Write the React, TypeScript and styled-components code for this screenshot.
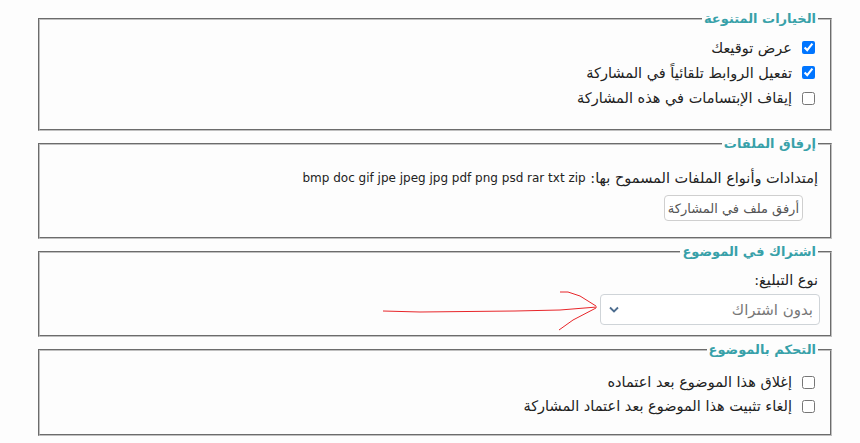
import React from "react";
import styled, { createGlobalStyle } from "styled-components";

const GlobalStyle = createGlobalStyle`
  html, body { margin: 0; padding: 0; background: #fdfdfd; }
  body { font-family: "DejaVu Sans", "Noto Sans", sans-serif; font-size: 14.5px; color: #222; }
`;

const Page = styled.div`
  position: relative;
  direction: rtl;
  padding: 11px 26px 0 36px;
  display: flex;
  flex-direction: column;
  gap: 5px;
`;

const Fieldset = styled.fieldset<{ $pb: number }>`
  margin: 0 2px;
  padding: 4px 12px ${(p) => p.$pb}px;
  border: 2px groove #c0c0c0;
  min-width: 0;
`;

const Legend = styled.legend`
  padding: 0 2px;
  font-weight: bold;
  font-size: 13px;
  color: #38a1a9;
`;

const CheckList = styled.div<{ $top: number }>`
  display: flex;
  flex-direction: column;
  padding-top: ${(p) => p.$top}px;
`;

const CheckRow = styled.label<{ $h: number }>`
  display: flex;
  align-items: center;
  gap: 10px;
  height: ${(p) => p.$h}px;
`;

const Check = styled.input.attrs({ type: "checkbox" })`
  margin: 0 3px 0 0;
  width: 13px;
  height: 13px;
`;

const Line = styled.div`
  height: 26px;
  display: flex;
  align-items: center;
  padding-top: 10px;
`;

const Latin = styled.span`
  font-family: "DejaVu Sans", sans-serif;
  font-size: 12px;
`;

const AttachButton = styled.span`
  display: inline-flex;
  align-items: center;
  align-self: flex-start;
  box-sizing: border-box;
  margin: 4px 15px 0 0;
  height: 26px;
  padding: 0 3px;
  border: 1px solid #cfcfcf;
  border-radius: 4px;
  color: #555;
  background: #fff;
  font-size: 13px;
`;

const Column = styled.div`
  display: flex;
  flex-direction: column;
`;

const FieldLabel = styled.div`
  padding-top: 7px;
  height: 20px;
  display: flex;
  align-items: center;
`;

const SelectBox = styled.div`
  margin-top: 4px;
  margin-right: -2px;
  width: 220px;
  height: 31px;
  border: 1px solid #cfd4d8;
  border-radius: 4px;
  background: #fff;
  display: flex;
  align-items: center;
  justify-content: space-between;
  padding: 0 6px 0 8px;
  box-sizing: border-box;
  color: #777;
  font-size: 15px;
`;

const Arrow = styled.svg`
  position: absolute;
  left: 0;
  top: 0;
  pointer-events: none;
`;

export default function App() {
  return (
    <>
      <GlobalStyle />
      <Page>
        <Fieldset $pb={18}>
          <Legend>الخيارات المتنوعة</Legend>
          <CheckList $top={5}>
            <CheckRow $h={25}><Check defaultChecked />عرض توقيعك</CheckRow>
            <CheckRow $h={25}><Check defaultChecked />تفعيل الروابط تلقائياً في المشاركة</CheckRow>
            <CheckRow $h={26}><Check />إيقاف الإبتسامات في هذه المشاركة</CheckRow>
          </CheckList>
        </Fieldset>
        <Fieldset $pb={16}>
          <Legend>إرفاق الملفات</Legend>
          <Column>
            <Line>
              إمتدادات وأنواع الملفات المسموح بها:&nbsp;<Latin dir="ltr">bmp doc gif jpe jpeg jpg pdf png psd rar txt zip</Latin>
            </Line>
            <AttachButton>أرفق ملف في المشاركة</AttachButton>
          </Column>
        </Fieldset>
        <Fieldset $pb={10}>
          <Legend>اشتراك في الموضوع</Legend>
          <Column>
            <FieldLabel>نوع التبليغ:</FieldLabel>
            <SelectBox>
              <span>بدون اشتراك</span>
              <svg width="10" height="7" viewBox="0 0 10 7">
                <path d="M1 1.5 L5 5.5 L9 1.5" fill="none" stroke="#4d6d8f" strokeWidth="1.8" />
              </svg>
            </SelectBox>
          </Column>
        </Fieldset>
        <Fieldset $pb={16}>
          <Legend>التحكم بالموضوع</Legend>
          <CheckList $top={9}>
            <CheckRow $h={24}><Check />إغلاق هذا الموضوع بعد اعتماده</CheckRow>
            <CheckRow $h={24}><Check />إلغاء تثبيت هذا الموضوع بعد اعتماد المشاركة</CheckRow>
          </CheckList>
        </Fieldset>
        <Arrow width="860" height="443" viewBox="0 0 860 443">
          <g fill="none" stroke="#e8262a" strokeWidth="1">
            <path d="M383 311 L420 312 L515 311 L560 310 L597 307" />
            <path d="M560 292 L568 292 L580 296 L596 306" />
            <path d="M559 330 L573 320 L596 308" />
          </g>
        </Arrow>
      </Page>
    </>
  );
}
